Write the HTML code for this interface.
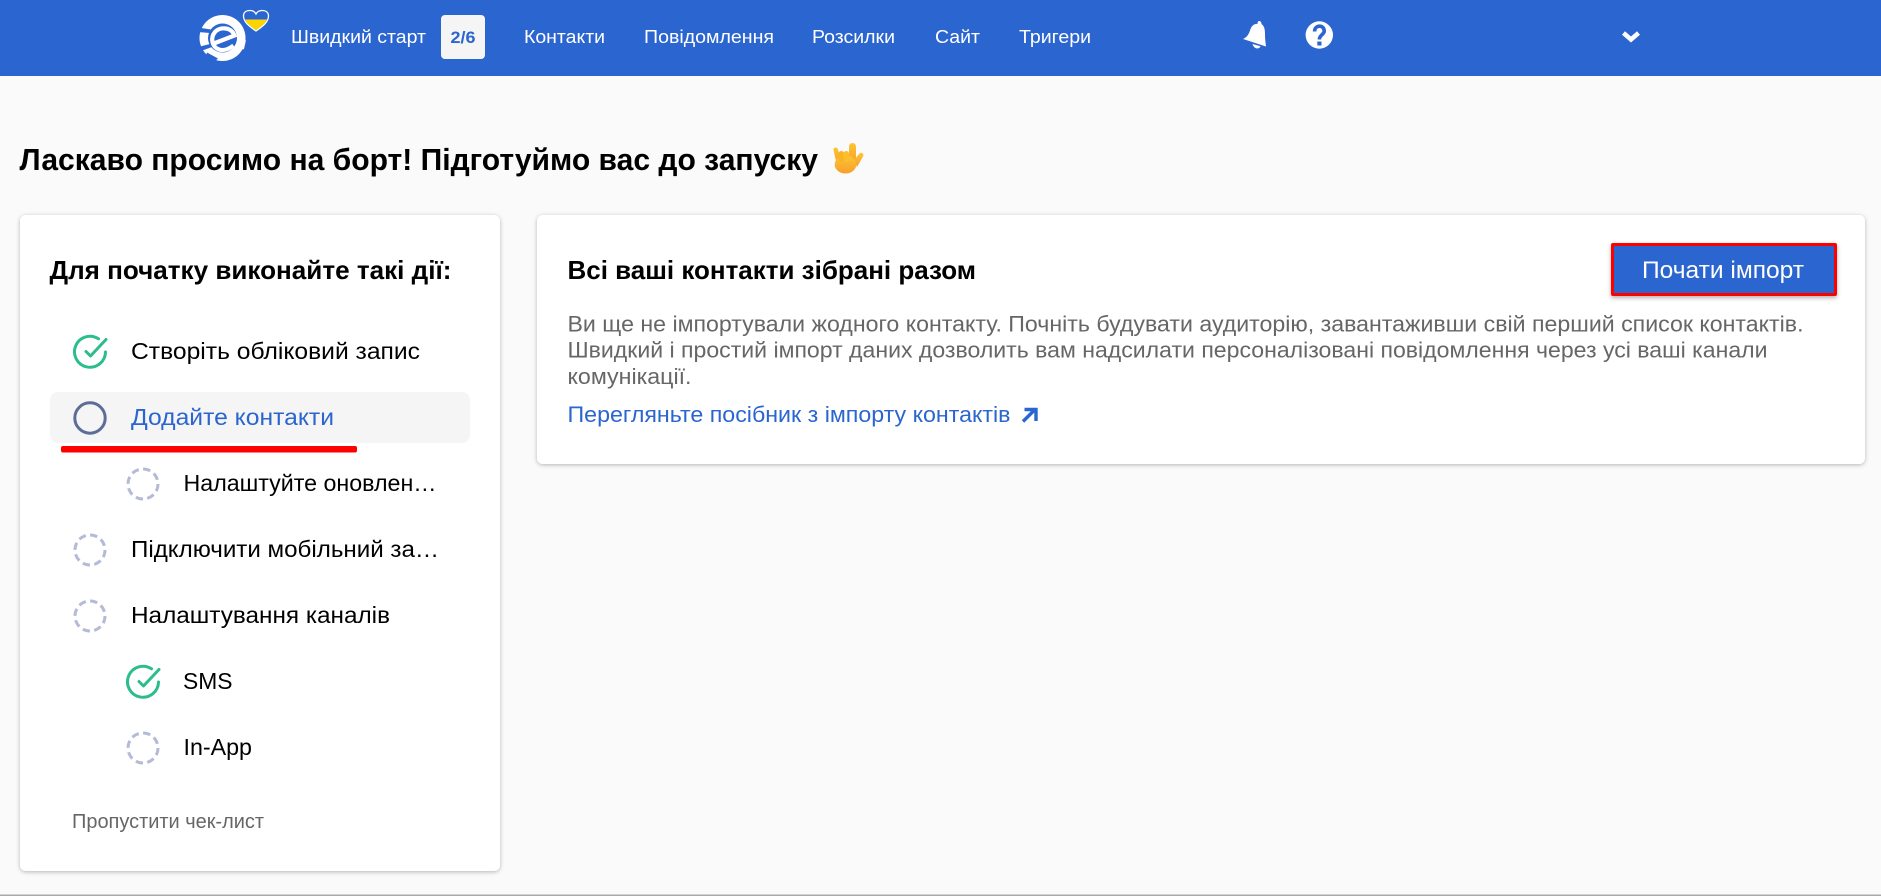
<!DOCTYPE html>
<html lang="uk">
<head>
<meta charset="utf-8">
<title>Швидкий старт</title>
<style>
html,body{margin:0;padding:0;width:1881px;height:896px;overflow:hidden;background:#fafafa}
svg{display:block;position:absolute;left:0;top:0}
text{font-family:"Liberation Sans",Arial,sans-serif}
.nav{font-size:18.5px;fill:#fff}
.h{font-weight:700;fill:#000}
.li{font-size:23.5px;fill:#000}
.p{font-size:22px;fill:#666}
</style>
</head>
<body>
<svg width="1881" height="896" viewBox="0 0 1881 896" xmlns="http://www.w3.org/2000/svg">
<defs>
<filter id="sh" x="-5%" y="-5%" width="110%" height="110%"><feDropShadow dx="0" dy="1" stdDeviation="2" flood-color="#000" flood-opacity=".28"/></filter>
<filter id="shb" x="-5%" y="-10%" width="110%" height="130%"><feDropShadow dx="0" dy="2" stdDeviation="2" flood-color="#000" flood-opacity=".3"/></filter>
<linearGradient id="hand" x1="0" y1="0" x2="0" y2="1"><stop offset="0" stop-color="#fdc535"/><stop offset="1" stop-color="#f7a029"/></linearGradient>
<clipPath id="hc"><rect x="240" y="19.500" width="32" height="14"/></clipPath>
</defs>
<rect width="1881" height="896" fill="#fafafa"/>
<rect x="0" y="894.500" width="1881" height="1.500" fill="#aaa"/>
<!-- header -->
<rect width="1881" height="76" fill="#2b65cf"/>
<!-- logo -->
<circle cx="222.500" cy="38" r="23" fill="#fff"/>
<circle cx="222.500" cy="38" r="14.500" fill="#2b65cf"/>
<path d="M198 27.500L211 29.500L210 33L198 32ZM198 47L210 44L212 47L201 51ZM207 52.500L218 58.500L214 62L205 59Z" fill="#2b65cf"/>
<path d="M212.500 44L234.500 35.500C232 27.500 220.500 26 215 32C210 38 212 47 219 49.500C223.500 51 229 49 233.500 45.500" fill="none" stroke="#fff" stroke-width="4.200"/>
<path d="M230 53L240 44.500L246 40L244 49Z" fill="#fff"/>
<!-- heart -->
<path d="M256 31C249 26 243.500 22 243.500 16C243.500 12 246.500 10.500 250 10.500C253 10.500 255 12 256 14C257 12 259 10.500 262 10.500C265.500 10.500 268.500 12 268.500 16C268.500 22 263 26 256 31Z" fill="#2b65cf" stroke="#fff" stroke-width="1.300"/>
<path clip-path="url(#hc)" d="M256 30.200C249.500 25.500 244.200 21.500 244.200 16C244.200 12 267.800 12 267.800 16C267.800 21.500 262.500 25.500 256 30.200Z" fill="#ffd500"/>
<text class="nav" x="291" y="43" textLength="135" lengthAdjust="spacingAndGlyphs">Швидкий старт</text>
<rect x="441" y="15" width="44" height="44" rx="4" fill="#f5f5f5"/>
<text x="463" y="43" text-anchor="middle" font-size="17" font-weight="700" fill="#2b65cf" textLength="25" lengthAdjust="spacingAndGlyphs">2/6</text>
<text class="nav" x="524" y="43" textLength="81" lengthAdjust="spacingAndGlyphs">Контакти</text>
<text class="nav" x="644" y="43" textLength="130" lengthAdjust="spacingAndGlyphs">Повідомлення</text>
<text class="nav" x="812" y="43" textLength="83" lengthAdjust="spacingAndGlyphs">Розсилки</text>
<text class="nav" x="935" y="43" textLength="45" lengthAdjust="spacingAndGlyphs">Сайт</text>
<text class="nav" x="1019" y="43" textLength="72" lengthAdjust="spacingAndGlyphs">Тригери</text>
<!-- bell -->
<path d="M1258.800 21C1260.300 20.800 1261.500 22 1261.500 24C1264.500 26 1265 30 1265 34C1265 39 1265.500 42 1266 46.500L1243 39C1246.500 37.500 1248.500 35 1250 30.500C1251.500 26 1254 23.500 1257.500 24C1257.500 22.500 1257.800 21.300 1258.800 21Z" fill="#fff"/>
<path d="M1252.500 44L1260.500 46.300C1259.500 49.500 1254 49.500 1252.500 44Z" fill="#fff"/>
<!-- help -->
<circle cx="1319.300" cy="35" r="13.700" fill="#fff"/>
<path d="M1314.600 31.500C1314.600 24.500 1324.200 24.500 1324.200 31C1324.200 34.800 1319.400 34.500 1319.400 39.500" fill="none" stroke="#2b65cf" stroke-width="3.600"/>
<rect x="1317.300" y="41.500" width="4.200" height="4" fill="#2b65cf"/>
<!-- chevron -->
<path d="M1623.500 33L1631 39.500L1638.500 33" fill="none" stroke="#fff" stroke-width="4.500"/>
<!-- heading -->
<text class="h" x="19.500" y="170" font-size="30.500" textLength="798.500" lengthAdjust="spacingAndGlyphs">Ласкаво просимо на борт! Підготуймо вас до запуску</text>
<!-- emoji -->
<g fill="url(#hand)">
<path d="M833.500 150C833 147 837.500 146.500 838 149.500L841 161L836.500 163Z"/>
<rect x="849" y="143" width="7" height="20" rx="3.500"/>
<path d="M854 160L859.500 153.500C861.500 151.500 864.500 154 863 156.500L857 167Z"/>
<ellipse cx="845.500" cy="164.500" rx="10.800" ry="9"/>
</g>
<rect x="838.500" y="151" width="5.500" height="11" rx="2.700" fill="#fbb225"/>
<rect x="843.500" y="151" width="5.500" height="11" rx="2.700" fill="#fdbd2c"/>
<!-- left card -->
<rect x="20" y="215" width="480" height="656" rx="6" fill="#fff" filter="url(#sh)"/>
<text class="h" x="49.500" y="279" font-size="26" textLength="402" lengthAdjust="spacingAndGlyphs">Для початку виконайте такі дії:</text>
<!-- row 1 -->
<path d="M98.500 338.800A15.500 15.500 0 1 0 105.500 352" fill="none" stroke="#2bbd8a" stroke-width="3" stroke-linecap="round"/>
<path d="M86 351.500L90.500 356L106 339.500" fill="none" stroke="#2bbd8a" stroke-width="3" stroke-linecap="round" stroke-linejoin="round"/>
<text class="li" x="131" y="359" textLength="289" lengthAdjust="spacingAndGlyphs">Створіть обліковий запис</text>
<!-- row 2 -->
<rect x="50" y="392" width="420" height="51" rx="8" fill="#f5f5f5"/>
<circle cx="90" cy="418" r="15.200" fill="none" stroke="#5d6d98" stroke-width="3"/>
<text class="li" x="131" y="425" textLength="203" lengthAdjust="spacingAndGlyphs" style="fill:#2b65cf">Додайте контакти</text>
<rect x="61" y="446" width="296" height="6.500" rx="2" fill="#f00"/>
<!-- row 3 -->
<circle cx="143" cy="484" r="15" fill="none" stroke="#b5bbd6" stroke-width="3" stroke-dasharray="7.400 4.380"/>
<text class="li" x="183.500" y="491" textLength="253" lengthAdjust="spacingAndGlyphs">Налаштуйте оновлен…</text>
<!-- row 4 -->
<circle cx="90" cy="550" r="15" fill="none" stroke="#b5bbd6" stroke-width="3" stroke-dasharray="7.400 4.380"/>
<text class="li" x="131" y="557" textLength="308" lengthAdjust="spacingAndGlyphs">Підключити мобільний за…</text>
<!-- row 5 -->
<circle cx="90" cy="616" r="15" fill="none" stroke="#b5bbd6" stroke-width="3" stroke-dasharray="7.400 4.380"/>
<text class="li" x="131" y="623" textLength="259" lengthAdjust="spacingAndGlyphs">Налаштування каналів</text>
<!-- row 6 -->
<path d="M151.500 668.800A15.500 15.500 0 1 0 158.500 682" fill="none" stroke="#2bbd8a" stroke-width="3" stroke-linecap="round"/>
<path d="M139 681.500L143.500 686L159 669.500" fill="none" stroke="#2bbd8a" stroke-width="3" stroke-linecap="round" stroke-linejoin="round"/>
<text class="li" x="183" y="689" textLength="49.500" lengthAdjust="spacingAndGlyphs">SMS</text>
<!-- row 7 -->
<circle cx="143" cy="748" r="15" fill="none" stroke="#b5bbd6" stroke-width="3" stroke-dasharray="7.400 4.380"/>
<text class="li" x="183.500" y="755" textLength="68.500" lengthAdjust="spacingAndGlyphs">In-App</text>
<text x="72" y="828" font-size="20" fill="#666" textLength="192" lengthAdjust="spacingAndGlyphs">Пропустити чек-лист</text>
<!-- right card -->
<rect x="537" y="215" width="1328" height="249" rx="6" fill="#fff" filter="url(#sh)"/>
<text class="h" x="567.500" y="279" font-size="26" textLength="408.500" lengthAdjust="spacingAndGlyphs">Всі ваші контакти зібрані разом</text>
<text class="p" x="567.500" y="331.500" textLength="1236" lengthAdjust="spacingAndGlyphs">Ви ще не імпортували жодного контакту. Почніть будувати аудиторію, завантаживши свій перший список контактів.</text>
<text class="p" x="567.500" y="357.500" textLength="1200" lengthAdjust="spacingAndGlyphs">Швидкий і простий імпорт даних дозволить вам надсилати персоналізовані повідомлення через усі ваші канали</text>
<text class="p" x="567.500" y="384" textLength="124" lengthAdjust="spacingAndGlyphs">комунікації.</text>
<text x="567.500" y="422" font-size="22" fill="#2b65cf" textLength="443" lengthAdjust="spacingAndGlyphs">Перегляньте посібник з імпорту контактів</text>
<path d="M1023 421.500L1035 409.500M1024.500 409.500H1036V421" fill="none" stroke="#2b65cf" stroke-width="3.400"/>
<!-- button -->
<rect x="1611" y="243" width="226" height="53" rx="2" fill="#f00" filter="url(#shb)"/>
<rect x="1614" y="246" width="220" height="47" fill="#2b65cf"/>
<text x="1642" y="278" font-size="24" fill="#fff" textLength="162" lengthAdjust="spacingAndGlyphs">Почати імпорт</text>
</svg>
</body>
</html>
